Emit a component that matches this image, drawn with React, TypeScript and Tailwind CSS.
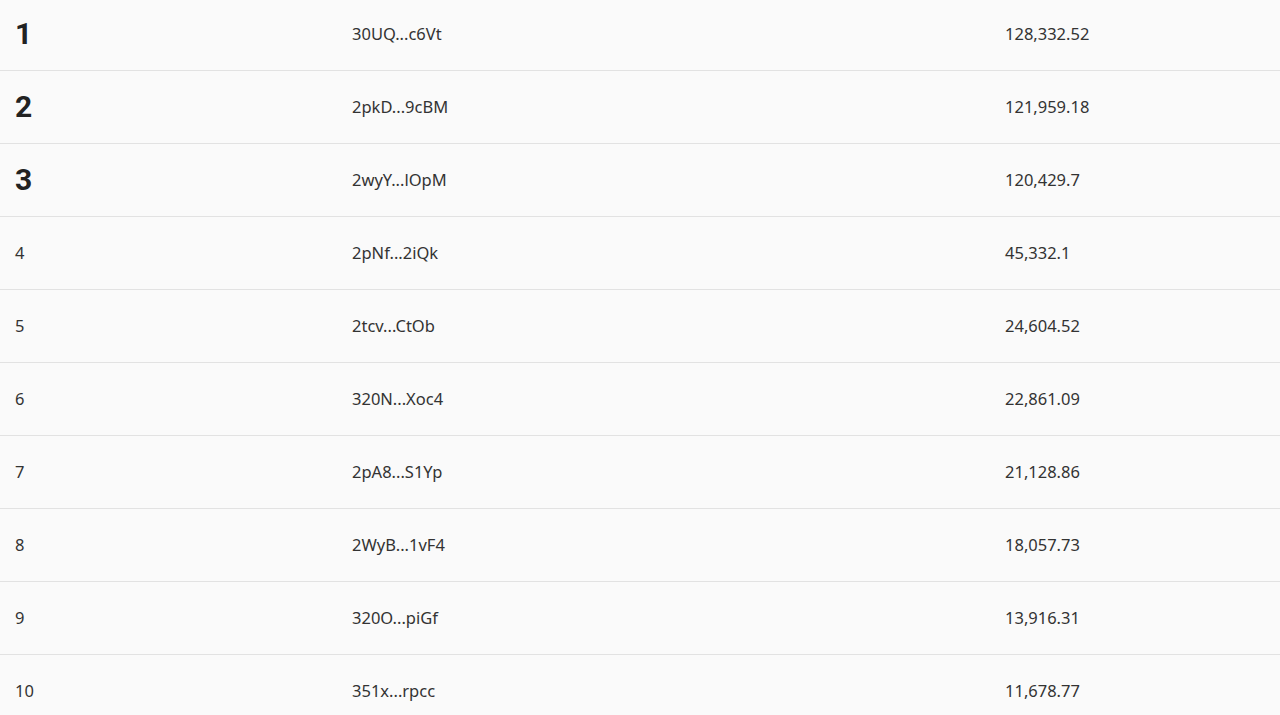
const rows = [
  { rank: 1, address: "30UQ...c6Vt", amount: "128,332.52" },
  { rank: 2, address: "2pkD...9cBM", amount: "121,959.18" },
  { rank: 3, address: "2wyY...lOpM", amount: "120,429.7" },
  { rank: 4, address: "2pNf...2iQk", amount: "45,332.1" },
  { rank: 5, address: "2tcv...CtOb", amount: "24,604.52" },
  { rank: 6, address: "320N...Xoc4", amount: "22,861.09" },
  { rank: 7, address: "2pA8...S1Yp", amount: "21,128.86" },
  { rank: 8, address: "2WyB...1vF4", amount: "18,057.73" },
  { rank: 9, address: "320O...piGf", amount: "13,916.31" },
  { rank: 10, address: "351x...rpcc", amount: "11,678.77" },
];

export default function App() {
  return (
    <div className="min-h-[715px] w-full overflow-hidden bg-[#fafafa] font-['Noto_Sans',sans-serif] text-[#333333]">
      <div className="-mt-[2px]">
        {rows.map((row) => (
          <div
            key={row.rank}
            className="flex h-[73px] items-center border-b border-[#e2e2e2]"
          >
            <div className="w-[352px] pl-[15px]">
              {row.rank <= 3 ? (
                <span className="font-['Roboto',sans-serif] text-[30px] leading-none font-bold text-[#222222]">
                  {row.rank}
                </span>
              ) : (
                <span className="text-[16.5px]">{row.rank}</span>
              )}
            </div>
            <div className="w-[653px] text-[16.5px]">{row.address}</div>
            <div className="flex-1 text-[16.5px]">{row.amount}</div>
          </div>
        ))}
      </div>
    </div>
  );
}
